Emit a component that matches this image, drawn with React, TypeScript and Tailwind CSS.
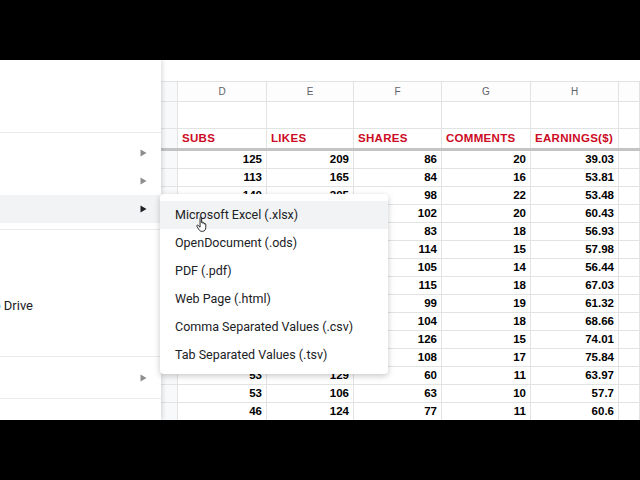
import React from "react";

const D = ["125", "113", "140", "131", "97", "118", "122", "109", "101", "117", "135", "112", "53", "53", "46"];
const E = ["209", "165", "205", "188", "171", "196", "183", "177", "160", "190", "214", "201", "129", "106", "124"];
const F = ["86", "84", "98", "102", "83", "114", "105", "115", "99", "104", "126", "108", "60", "63", "77"];
const G = ["20", "16", "22", "20", "18", "15", "14", "18", "19", "18", "15", "17", "11", "10", "11"];
const H = ["39.03", "53.81", "53.48", "60.43", "56.93", "57.98", "56.44", "67.03", "61.32", "68.66", "74.01", "75.84", "63.97", "57.7", "60.6"];

const cols = "grid grid-cols-[17px_89px_87px_88px_89px_88px_1fr]";
const cell = "border-r border-b border-[#e2e3e3]";

function Arrow({ dark }: { dark?: boolean }) {
  return (
    <svg width="7" height="8" viewBox="0 0 7 8" className="mr-[14px]">
      <path d="M0.5 0.5 L6.5 4 L0.5 7.5 Z" fill={dark ? "#202124" : "#8d8d8d"} />
    </svg>
  );
}

function LeftItem({ arrow, active, children }: { arrow?: boolean; active?: boolean; children?: React.ReactNode }) {
  return (
    <div className={`h-[28px] shrink-0 flex items-center justify-between ${active ? "bg-[#f1f3f4]" : ""}`}>
      <div className="w-[33px] flex justify-end whitespace-nowrap text-[13px] text-[#202124]">{children}</div>
      {arrow ? <Arrow dark={active} /> : null}
    </div>
  );
}

function Sep() {
  return <div className="h-px shrink-0 bg-[#e8eaed]" />;
}

export default function App() {
  const items = [
    "Microsoft Excel (.xlsx)",
    "OpenDocument (.ods)",
    "PDF (.pdf)",
    "Web Page (.html)",
    "Comma Separated Values (.csv)",
    "Tab Separated Values (.tsv)",
  ];
  return (
    <div className="w-[640px] h-[480px] bg-black flex flex-col relative" style={{ fontFamily: "Roboto, 'Liberation Sans', sans-serif" }}>
      <div className="h-[60px] shrink-0 bg-black" />
      <div className="h-[360px] shrink-0 flex relative overflow-hidden bg-white">
        {/* left menu */}
        <div className="w-[161px] shrink-0 bg-white relative z-10 shadow-[2px_0_4px_rgba(0,0,0,0.12)] flex flex-col overflow-hidden">
          <div className="h-[72px] shrink-0" />
          <Sep />
          <div className="pt-[6px] pb-[6px] shrink-0">
            <LeftItem arrow />
            <LeftItem arrow />
            <LeftItem arrow active />
          </div>
          <Sep />
          <div className="pt-[6px] pb-[8px] shrink-0">
            <LeftItem />
            <LeftItem />
            <LeftItem>Add shortcut to Drive</LeftItem>
            <LeftItem />
          </div>
          <Sep />
          <div className="pt-[7px] pb-[6px] shrink-0">
            <LeftItem arrow />
          </div>
          <Sep />
          <div className="pt-[6px] shrink-0">
            <LeftItem />
          </div>
        </div>

        {/* sheet */}
        <div className="flex-1 flex flex-col bg-white" style={{ fontFamily: "'Liberation Sans', Arial, sans-serif" }}>
          <div className="h-[22px] shrink-0 border-b border-[#e2e3e3]" />
          <div className={`${cols} h-[20px] shrink-0 text-[10px] text-[#5f6368] bg-[#fdfdfd]`}>
            <div className={`${cell} bg-[#f8f9fa]`} />
            {["D", "E", "F", "G", "H", ""].map((c, i) => (
              <div key={i} className={`${cell} flex items-center justify-center`}>{c}</div>
            ))}
          </div>
          <div className={`${cols} h-[27px] shrink-0`}>
            <div className={`${cell} bg-[#f8f9fa]`} />
            {[0, 1, 2, 3, 4, 5].map((i) => (
              <div key={i} className={cell} />
            ))}
          </div>
          <div className={`${cols} h-[19px] shrink-0 text-[11.5px] font-bold text-[#cc0a24] tracking-[0.3px]`}>
            <div className="border-r border-[#e2e3e3] bg-[#f8f9fa]" />
            {["SUBS", "LIKES", "SHARES", "COMMENTS", "EARNINGS($)", ""].map((c, i) => (
              <div key={i} className="border-r border-[#e2e3e3] flex items-center pl-[4px] whitespace-nowrap overflow-hidden">{c}</div>
            ))}
          </div>
          <div className="h-[3px] shrink-0 bg-[#c4c4c4]" />
          {D.map((_, r) => (
            <div key={r} className={`${cols} h-[18px] shrink-0 text-[11.5px] font-bold text-black`}>
              <div className={`${cell} bg-[#f8f9fa]`} />
              {[D[r], E[r], F[r], G[r], H[r], ""].map((v, i) => (
                <div key={i} className={`${cell} flex items-center justify-end pr-[4px]`}>{v}</div>
              ))}
            </div>
          ))}
        </div>

        {/* submenu */}
        <div className="absolute left-[160px] top-[134px] w-[228px] bg-white z-20 rounded-[4px] shadow-[0_2px_6px_rgba(0,0,0,0.22)] pt-[7px] pb-[5px]">
          {items.map((t, i) => (
            <div key={t} className={`h-[28px] flex items-center pl-[15px] text-[12.5px] text-[#202124] whitespace-nowrap ${i === 0 ? "bg-[#f1f3f4]" : ""}`}>
              {t}
            </div>
          ))}
        </div>

        {/* cursor */}
        <svg className="absolute left-[196px] top-[156px] z-30" width="13" height="17" viewBox="0 0 16 20">
          <path
            d="M5 1.8 C5 0.6 6.9 0.6 6.9 1.8 V7.6 C6.9 6.6 8.6 6.6 8.6 7.6 V8.6 C8.6 7.6 10.3 7.6 10.3 8.6 V9.6 C10.3 8.7 12 8.7 12 9.6 V13.8 C12 16.6 10.6 18.4 8 18.4 H7.2 C5.4 18.4 4.4 17.6 3.4 16 L1.1 12.3 C0.5 11.2 1.8 10.2 2.7 11.1 L5 13.4 Z"
            fill="#fff"
            stroke="#111"
            strokeWidth="1.1"
            strokeLinejoin="round"
          />
        </svg>
      </div>
      <div className="h-[60px] shrink-0 bg-black" />
    </div>
  );
}
